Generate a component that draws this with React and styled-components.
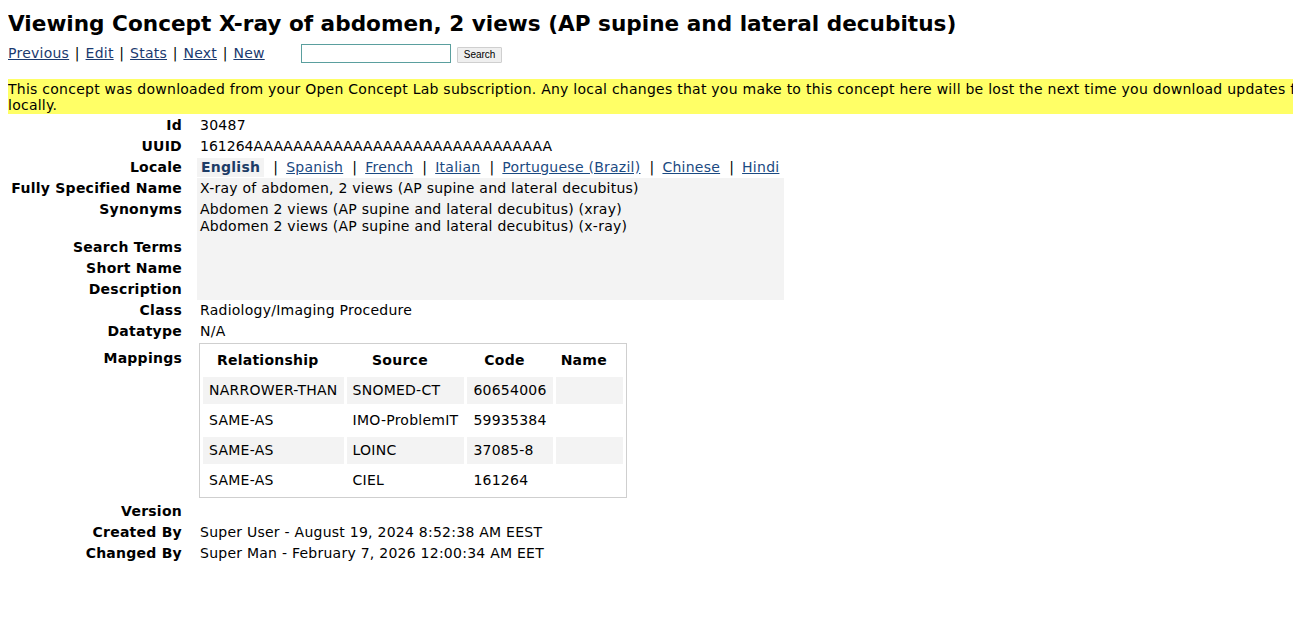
import styled, { createGlobalStyle } from 'styled-components'

const GlobalStyle = createGlobalStyle`
  html {
    overflow: hidden;
  }
  body {
    margin: 8px 0 8px 8px;
    background: #fff;
    color: #000;
    font-family: "DejaVu Sans", Verdana, sans-serif;
    font-size: 14px;
    letter-spacing: 0.25px;
  }
`

const locales = ['English', 'Spanish', 'French', 'Italian', 'Portuguese (Brazil)', 'Chinese', 'Hindi']

const mappings = [
  { rel: 'NARROWER-THAN', source: 'SNOMED-CT', code: '60654006' },
  { rel: 'SAME-AS', source: 'IMO-ProblemIT', code: '59935384' },
  { rel: 'SAME-AS', source: 'LOINC', code: '37085-8' },
  { rel: 'SAME-AS', source: 'CIEL', code: '161264' },
]

const App = () => {
  return (
    <Page>
      <GlobalStyle />
      <Title>Viewing Concept X-ray of abdomen, 2 views (AP supine and lateral decubitus)</Title>
      <NavBar>
        <NavLinks>
          <Link href="#">Previous</Link> | <Link href="#">Edit</Link> | <Link href="#">Stats</Link> | <Link href="#">Next</Link> | <Link href="#">New</Link>
        </NavLinks>
        <SearchForm>
          <SearchInput type="text" />
          <SearchButton type="button">Search</SearchButton>
        </SearchForm>
      </NavBar>
      <Notice>
        <NoticeLine>
          This concept was downloaded from your Open Concept Lab subscription. Any local changes that you make to this concept here will be lost the next time you download updates f
        </NoticeLine>
        locally.
      </Notice>

      <Details>
        <Label>Id</Label>
        <Value>30487</Value>

        <Label>UUID</Label>
        <Value $plain>161264AAAAAAAAAAAAAAAAAAAAAAAAAAAAAA</Value>

        <Label>Locale</Label>
        <LocaleValue>
          {locales.map((name, i) => (
            <LocaleItem key={name}>
              {i > 0 && <Sep>|</Sep>}
              {i === 0 ? <LocaleTab>{name}</LocaleTab> : <LocaleLink href="#">{name}</LocaleLink>}
            </LocaleItem>
          ))}
        </LocaleValue>

        <Label>Fully Specified Name</Label>
        <Value $shaded>X-ray of abdomen, 2 views (AP supine and lateral decubitus)</Value>

        <Label>Synonyms</Label>
        <Value $shaded>
          Abdomen 2 views (AP supine and lateral decubitus) (xray)<br />
          Abdomen 2 views (AP supine and lateral decubitus) (x-ray)
        </Value>

        <Label>Search Terms</Label>
        <Value $shaded>&nbsp;</Value>

        <Label>Short Name</Label>
        <Value $shaded>&nbsp;</Value>

        <Label>Description</Label>
        <Value $shaded>&nbsp;</Value>

        <Label>Class</Label>
        <Value>Radiology/Imaging Procedure</Value>

        <Label>Datatype</Label>
        <Value>N/A</Value>

        <Label $top>Mappings</Label>
        <MappingCell>
          <MapTable>
            <thead>
              <tr>
                <HeadCell>Relationship</HeadCell>
                <HeadCell>Source</HeadCell>
                <HeadCell>Code</HeadCell>
                <HeadCell>Name</HeadCell>
              </tr>
            </thead>
            <tbody>
              {mappings.map((m, i) => (
                <tr key={i}>
                  <MapCell $even={i % 2 === 0}>{m.rel}</MapCell>
                  <MapCell $even={i % 2 === 0}>{m.source}</MapCell>
                  <MapCell $even={i % 2 === 0}>{m.code}</MapCell>
                  <MapCell $even={i % 2 === 0}></MapCell>
                </tr>
              ))}
            </tbody>
          </MapTable>
        </MappingCell>

        <Label>Version</Label>
        <Value>&nbsp;</Value>

        <Label>Created By</Label>
        <Value>Super User - August 19, 2024 8:52:38 AM EEST</Value>

        <Label>Changed By</Label>
        <Value>Super Man - February 7, 2026 12:00:34 AM EET</Value>
      </Details>
    </Page>
  )
}

const Page = styled.div`
  width: 100%;
`

const Title = styled.h2`
  margin: 3px 0 5px;
  font-size: 21.6px;
  line-height: 26px;
  font-weight: bold;
  letter-spacing: 0;
  white-space: nowrap;
`

const NavBar = styled.div`
  display: flex;
  align-items: center;
  height: 22px;
`

const NavLinks = styled.div`
  line-height: 17px;
  white-space: nowrap;
  word-spacing: 1px;
`

const Link = styled.a`
  color: #1b3a6f;
  text-decoration: underline;
`

const SearchForm = styled.div`
  display: flex;
  align-items: center;
  margin-left: 36px;
  gap: 6px;
`

const SearchInput = styled.input`
  box-sizing: border-box;
  width: 150px;
  height: 19px;
  border: 1px solid #5a9f9e;
  padding: 1px 3px;
  margin: 0;
  outline: none;
`

const SearchButton = styled.button`
  box-sizing: border-box;
  height: 16px;
  margin-top: 3px;
  padding: 0 6px;
  font-family: "Liberation Sans", Arial, sans-serif;
  font-size: 10px;
  letter-spacing: 0;
  color: #000;
  background: #efefef;
  border: 1px solid #cfcfcf;
  border-radius: 1px;
`

const Notice = styled.div`
  margin-top: 15px;
  padding: 2px 0 1px;
  background: #ffff66;
  line-height: 16px;
  font-size: 14px;
`

const NoticeLine = styled.div`
  white-space: nowrap;
`

const Details = styled.div`
  display: grid;
  grid-template-columns: 189px max-content;
  line-height: 17px;
  padding-top: 1px;
`

const Label = styled.div`
  font-weight: bold;
  text-align: right;
  padding: ${p => (p.$top ? '8px' : '2px')} 15px 2px 0;
`

const Value = styled.div`
  padding: 2px 3px;
  letter-spacing: ${p => (p.$plain ? '0' : 'inherit')};
  background: ${p => (p.$shaded ? '#f3f3f3' : 'transparent')};
`

const LocaleValue = styled.div`
  display: flex;
  align-items: center;
  padding: 1px 5px 1px 0;
`

const LocaleItem = styled.span`
  display: flex;
  align-items: center;
  white-space: nowrap;
`

const Sep = styled.span`
  padding: 0 8px 0 9px;
`

const LocaleTab = styled.span`
  display: inline-block;
  padding: 1px 4px 1px;
  background: #f3f3f3;
  color: #1d3c66;
  font-weight: bold;
`

const LocaleLink = styled.a`
  color: #1b4a82;
  text-decoration: underline;
`

const MappingCell = styled.div`
  padding: 1px 0 3px 2px;
`

const MapTable = styled.table`
  border: 1px solid #cfcfcf;
  border-spacing: 3px;
  font-size: 14px;
`

const HeadCell = styled.th`
  padding: 5px 16px 5px 5px;
  line-height: 17px;
  text-align: center;
  font-weight: bold;
`

const MapCell = styled.td`
  padding: 5px 6px;
  line-height: 17px;
  white-space: nowrap;
  background: ${p => (p.$even ? '#f3f3f3' : 'transparent')};
`

export default App
